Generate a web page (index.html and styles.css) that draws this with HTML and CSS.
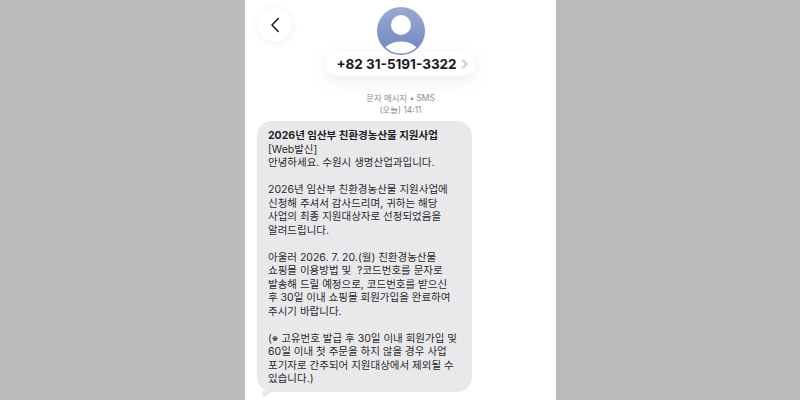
FILE: index.html
```html
<!DOCTYPE html>
<html lang="ko">
<head>
<meta charset="utf-8">
<title>SMS</title>
<link rel="stylesheet" href="styles.css">
</head>
<body>
<main class="phone">
  <header class="head">
    <button class="back" aria-label="back">
      <svg width="12" height="16" viewBox="0 0 12 16"><path d="M9.2 1.6 L3 8 L9.2 14.4" fill="none" stroke="#1a1a1c" stroke-width="1.5" stroke-linecap="round" stroke-linejoin="round"/></svg>
    </button>
    <div class="avatar">
      <svg width="48" height="48" viewBox="0 0 48 48">
        <defs><linearGradient id="g" x1="0" y1="0" x2="0" y2="1"><stop offset="0" stop-color="#9aaad4"/><stop offset="1" stop-color="#6f84c0"/></linearGradient>
        <clipPath id="c"><circle cx="24" cy="24" r="22.6"/></clipPath></defs>
        <circle cx="24" cy="24" r="24" fill="url(#g)"/>
        <circle cx="24" cy="18" r="10" fill="#fff"/>
        <ellipse cx="24" cy="46" rx="17.5" ry="11.5" fill="#fff" clip-path="url(#c)"/>
      </svg>
    </div>
    <div class="name">
      <span class="num">+82 31-5191-3322</span>
      <svg class="chev" width="7" height="10" viewBox="0 0 7 10"><path d="M1 1 L4.6 5 L1 9 M2.8 1 L6 5 L2.8 9" fill="none" stroke="#b9b9bd" stroke-width="1" stroke-linecap="round" stroke-linejoin="round"/></svg>
    </div>
    <div class="meta">문자 메시지 • SMS<br>(오늘) 14:11</div>
  </header>
  <div class="bubble">
    <p class="line"><b>2026년 임산부 친환경농산물 지원사업</b></p>
    <p class="line">[Web발신]</p>
    <p class="line">안녕하세요. 수원시 생명산업과입니다.</p>
    <p class="line">&nbsp;</p>
    <p class="line">2026년 임산부 친환경농산물 지원사업에</p>
    <p class="line">신청해 주셔서 감사드리며, 귀하는 해당</p>
    <p class="line">사업의 최종 지원대상자로 선정되었음을</p>
    <p class="line">알려드립니다.</p>
    <p class="line">&nbsp;</p>
    <p class="line">아울러 2026. 7. 20.(월) 친환경농산물</p>
    <p class="line">쇼핑몰 이용방법 및 &nbsp;?코드번호를 문자로</p>
    <p class="line">발송해 드릴 예정으로, 코드번호를 받으신</p>
    <p class="line">후 30일 이내 쇼핑몰 회원가입을 완료하여</p>
    <p class="line">주시기 바랍니다.</p>
    <p class="line">&nbsp;</p>
    <p class="line">(<span class="mark">※</span> 고유번호 발급 후 30일 이내 회원가입 및</p>
    <p class="line">60일 이내 첫 주문을 하지 않을 경우 사업</p>
    <p class="line">포기자로 간주되어 지원대상에서 제외될 수</p>
    <p class="line">있습니다.)</p>
    <span class="tail"></span>
  </div>
</main>
</body>
</html>
```
FILE: styles.css
```css
* { box-sizing: border-box; }
html, body { margin: 0; height: 400px; overflow: hidden; }
body { background: #bcbcbc; display: flex; justify-content: center; font-family: Inter, "Noto Sans CJK KR", sans-serif; }
.phone { width: 311px; height: 400px; background: #fff; padding: 0 0 0 12px; margin-left: 1px; overflow: hidden; }
.head { position: relative; display: flex; flex-direction: column; align-items: center; padding: 7px 12px 0 0; height: 121px; }
.back { position: absolute; left: 1px; top: 8px; width: 34px; height: 34px; border: 0; border-radius: 50%; background: #fff; box-shadow: 0 1px 9px rgba(0,0,0,.07); display: flex; align-items: center; justify-content: center; padding: 0; }
.avatar { width: 48px; height: 48px; position: relative; z-index: 3; }
.avatar svg { display: block; }
.name { position: relative; z-index: 2; margin-top: -3px; height: 24px; padding: 0 7px 0 10px; border-radius: 12px; background: #fff; box-shadow: 0 5px 20px rgba(0,0,0,.08); display: flex; align-items: center; gap: 4px; }
.num { font-size: 13.5px; font-weight: 700; color: #1a1a1c; white-space: nowrap; }
.chev { display: block; }
.meta { margin-top: 17px; font-size: 8.4px; line-height: 11.5px; color: #8d8d92; text-align: center; }
.bubble { position: relative; width: 215px; height: 271px; background: #e9e9eb; border-radius: 15px; padding: 8px 6px 0 11px; color: #2a2a2c; font-size: 10.5px; line-height: 13.5px; }
.line { margin: 0; white-space: nowrap; }
.line b { font-weight: 700; color: #1c1c1e; }
.mark { font-size: 10px; }
.tail { position: absolute; left: 5px; bottom: -6px; width: 11px; height: 7px; background: #e9e9eb; clip-path: polygon(0 0, 100% 0, 12% 100%); }
```
